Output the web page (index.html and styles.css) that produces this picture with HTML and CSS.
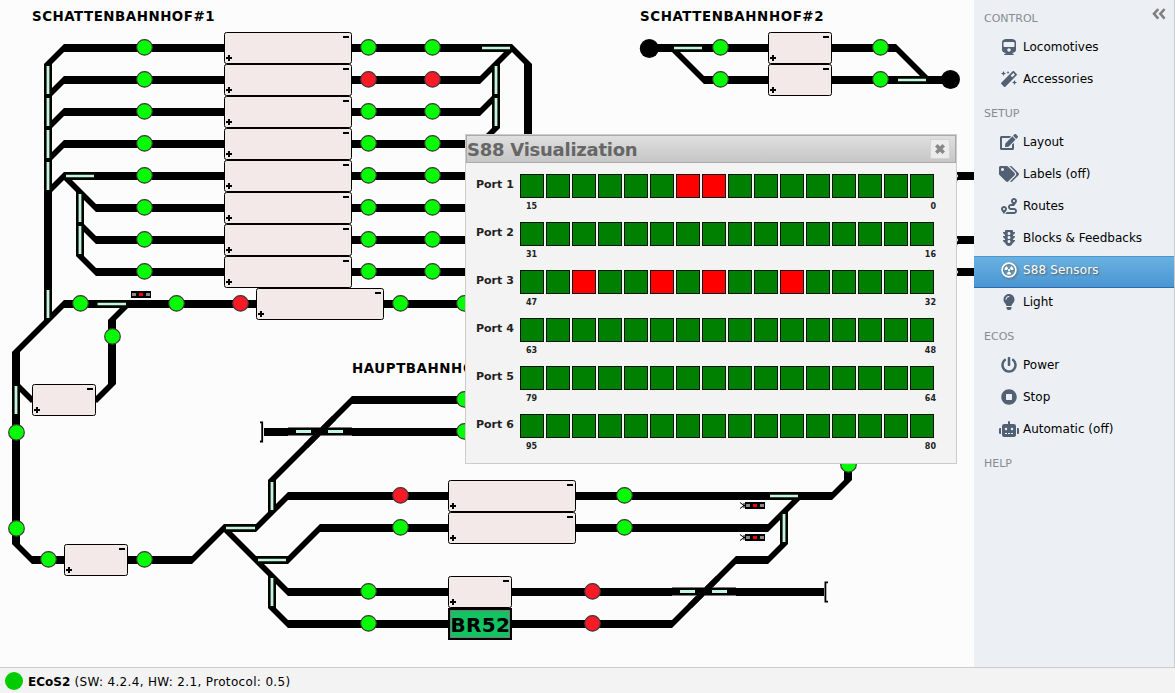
FILE: index.html
```html
<!DOCTYPE html>
<html lang="en">
<head>
<meta charset="utf-8">
<title>S88 Visualization</title>
<link rel="stylesheet" href="styles.css">
</head>
<body>
<div class="app">
  <main class="plan">
    <svg class="plan-canvas" width="974" height="667" viewBox="0 0 974 667">
      <path class="track" d="M64 48H512M64 80H480M64 112H480M64 144H480M64 176H480M96 208H480M96 240H480M96 272H480M64 304H480M32 560H192M224 528H256M256 560H288M288 496H832M320 528H768M352 400H480M264 432H480M288 592H824M288 624H672M736 560H768M656 48H896M704 80H944M950 176H974M950 240H974M950 272H974"/>
      <path class="track" d="M48 64V320M80 192V256M112 320V384M16 352V544M272 480V512M272 576V608M496 64V128M528 64V140M784 512V544M848 460V480"/>
      <path class="diagonal" d="M48 64L64 48M48 96L64 80M48 128L64 112M48 160L64 144M48 192L64 176M48 320L64 304M64 176L96 208M80 224L96 240M80 256L96 272M48 320L16 352M128 304L112 320M112 384L97 399M16 384L31 399M16 544L32 560M192 560L224 528M256 528L288 496M272 480L352 400M224 528L288 592M288 560L320 528M272 608L288 624M672 624L736 560M768 560L784 544M768 528L800 496M832 496L848 480M512 48L528 64M512 48L480 80M496 96L480 112M496 128L480 144M674 50L704 80M896 48L926 78M956 178L940 194M956 242L940 258"/>
      <path class="crossing-edge" d="M288 427.5H352M288 435.5H352M672 587.5H736M672 595.5H736"/>
      <path class="diagonal" d="M308 444L332 420M692 604L716 580"/>
      <path class="point" d="M66 176H94M97.5 304H126M482 48H510M226 528H255M258 560H286M770 496H798M674 48H702M898 80H926M954 176H958M954 240H958M954 272H958"/>
      <path class="point point-upright" d="M48 66V94M48 98V126M48 130V158M48 162V190M48 290V318M80 194V222M80 226V254M16 386V414M272 482V510M272 578V606M496 66V94M496 98V126M784 514V542"/>
      <path class="point point-wide" d="M296 431.5H311M328 431.5H343M680 591.5H695M712 591.5H727"/>
      <path class="buffer" d="M260 422.3H262.2V441.5H260M828 582.3H825.4V601.7H828"/>
      <circle cx="649.3" cy="48.5" r="9.5"/>
      <circle cx="950.5" cy="79.5" r="9.5"/>
      <g id="blocks"></g>
      <g id="sensors"></g>
      <g id="signals"></g>
      <rect x="449" y="609" width="62" height="30" class="train-frame"/>
      <rect x="450.5" y="610.5" width="59" height="27" class="train"/>
      <text class="train-name" x="450.5" y="631.6" textLength="59.5">BR52</text>
      <text class="station" x="32" y="21" textLength="182.5">SCHATTENBAHNHOF#1</text>
      <text class="station" x="640" y="21" textLength="183.5">SCHATTENBAHNHOF#2</text>
      <text class="station" x="352" y="373" textLength="132">HAUPTBAHNHOF</text>
    </svg>
  </main>

  <nav class="sidebar">
    <svg class="collapse" width="14" height="12" viewBox="0 0 14 12"><path d="M6.3 1L2 5.8L6.3 10.6M12.6 1L8.3 5.8L12.6 10.6"/></svg>
    <h2 class="group">CONTROL</h2>
    <a class="item"><svg class="icon" viewBox="0 0 448 512"><path d="M448 96v256c0 51.815-61.624 96-130.022 96l62.98 49.721C386.905 502.417 383.562 512 376 512H72c-7.578 0-10.892-9.594-4.957-14.279L130.022 448C61.82 448 0 403.954 0 352V96C0 42.981 64 0 128 0h192c65 0 128 42.981 128 96zm-48 136V120c0-13.255-10.745-24-24-24H72c-13.255 0-24 10.745-24 24v112c0 13.255 10.745 24 24 24h304c13.255 0 24-10.745 24-24zm-176 64c-30.928 0-56 25.072-56 56s25.072 56 56 56 56-25.072 56-56-25.072-56-56-56z"/></svg><span>Locomotives</span></a>
    <a class="item"><svg class="icon" viewBox="0 0 512 512"><path d="M224 96l16-32 32-16-32-16-16-32-16 32-32 16 32 16 16 32zM80 160l26.66-53.33L160 80l-53.34-26.67L80 0 53.34 53.33 0 80l53.34 26.67L80 160zm352 128l-26.66 53.33L352 368l53.34 26.67L432 448l26.66-53.33L512 368l-53.34-26.67L432 288zm70.62-193.77L417.77 9.38C411.53 3.12 403.34 0 395.15 0c-8.19 0-16.38 3.12-22.63 9.38L9.38 372.52c-12.5 12.5-12.5 32.76 0 45.25l84.85 84.85c6.25 6.25 14.44 9.37 22.62 9.37 8.19 0 16.38-3.12 22.63-9.37l363.14-363.15c12.5-12.48 12.5-32.75 0-45.24zM359.45 203.46l-50.91-50.91 86.6-86.6 50.91 50.91-86.6 86.6z"/></svg><span>Accessories</span></a>
    <h2 class="group">SETUP</h2>
    <a class="item"><svg class="icon" viewBox="0 0 576 512"><path d="M402.6 83.2l90.2 90.2c3.8 3.8 3.8 10 0 13.8L274.4 405.6l-92.8 10.3c-12.4 1.4-22.9-9.1-21.5-21.5l10.3-92.8L388.8 83.2c3.8-3.8 10-3.8 13.8 0zm162-22.9l-48.8-48.8c-15.2-15.2-39.9-15.2-55.2 0l-35.4 35.4c-3.8 3.8-3.8 10 0 13.8l90.2 90.2c3.8 3.8 10 3.8 13.8 0l35.4-35.4c15.2-15.3 15.2-40 0-55.2zM384 346.2V448H64V128h229.8c3.2 0 6.2-1.3 8.5-3.5l40-40c7.6-7.6 2.2-20.5-8.5-20.5H48C21.5 64 0 85.5 0 112v352c0 26.5 21.5 48 48 48h352c26.5 0 48-21.5 48-48V306.2c0-10.7-12.9-16-20.5-8.5l-40 40c-2.2 2.3-3.5 5.3-3.5 8.5z"/></svg><span>Layout</span></a>
    <a class="item"><svg class="icon" viewBox="0 0 640 512"><path d="M497.941 225.941L286.059 14.059A48 48 0 0 0 252.118 0H48C21.49 0 0 21.49 0 48v204.118a48 48 0 0 0 14.059 33.941l211.882 211.882c18.744 18.745 49.136 18.746 67.882 0l204.118-204.118c18.745-18.745 18.745-49.137 0-67.882zM112 160c-26.51 0-48-21.49-48-48s21.49-48 48-48 48 21.49 48 48-21.49 48-48 48zm513.941 133.823L421.823 497.941c-18.745 18.745-49.137 18.745-67.882 0l-.36-.36L527.64 323.522c16.999-16.999 26.36-39.6 26.36-63.64s-9.362-46.641-26.36-63.64L331.397 0h48.721a48 48 0 0 1 33.941 14.059l211.882 211.882c18.745 18.745 18.745 49.137 0 67.882z"/></svg><span>Labels (off)</span></a>
    <a class="item"><svg class="icon" viewBox="0 0 512 512"><path d="M416 320h-96c-17.6 0-32-14.4-32-32s14.4-32 32-32h96s96-107 96-160-43-96-96-96-96 43-96 96c0 25.5 22.2 63.4 45.3 96H320c-52.9 0-96 43.1-96 96s43.1 96 96 96h96c17.6 0 32 14.4 32 32s-14.4 32-32 32H185.5c-16 24.8-33.8 47.7-47.3 64H416c52.9 0 96-43.1 96-96s-43.1-96-96-96zm0-256c17.7 0 32 14.3 32 32s-14.3 32-32 32-32-14.3-32-32 14.3-32 32-32zM96 256c-53 0-96 43-96 96s96 160 96 160 96-107 96-160-43-96-96-96zm0 128c-17.7 0-32-14.3-32-32s14.3-32 32-32 32 14.3 32 32-14.3 32-32 32z"/></svg><span>Routes</span></a>
    <a class="item"><svg class="icon" viewBox="0 0 384 512"><path d="M384 192h-64v-37.88c37.2-13.22 64-48.38 64-90.12h-64V32c0-17.67-14.33-32-32-32H96C78.33 0 64 14.33 64 32v32H0c0 41.74 26.8 76.9 64 90.12V192H0c0 41.74 26.8 76.9 64 90.12V320H0c0 42.84 28.25 78.69 66.99 91.05C79.42 468.72 130.6 512 192 512s112.58-43.28 125.01-100.95C355.75 398.69 384 362.84 384 320h-64v-37.88c37.2-13.22 64-48.38 64-90.12zM192 416c-26.51 0-48-21.49-48-48s21.49-48 48-48 48 21.49 48 48-21.49 48-48 48zm0-128c-26.51 0-48-21.49-48-48s21.49-48 48-48 48 21.49 48 48-21.49 48-48 48zm0-128c-26.51 0-48-21.49-48-48s21.49-48 48-48 48 21.49 48 48-21.49 48-48 48z"/></svg><span>Blocks &amp; Feedbacks</span></a>
    <a class="item item-selected"><svg class="icon" viewBox="0 0 512 512"><path fill-rule="evenodd" d="M256 8a248 248 0 1 0 0 496a248 248 0 1 0 0-496zM256 62a194 194 0 1 1 0 388a194 194 0 1 1 0-388z"/><circle cx="256" cy="256" r="36"/><path d="M312 256H405A149 149 0 0 0 330 127L284 207A56 56 0 0 1 312 256zM200 256H107A149 149 0 0 1 182 127L228 207A56 56 0 0 0 200 256zM284 305L330 385A149 149 0 0 1 182 385L228 305A56 56 0 0 0 284 305z"/></svg><span>S88 Sensors</span></a>
    <a class="item"><svg class="icon" viewBox="0 0 352 512"><path d="M96.06 454.35c.01 6.29 1.87 12.45 5.36 17.69l17.09 25.69a31.99 31.99 0 0 0 26.64 14.28h61.71a31.99 31.99 0 0 0 26.64-14.28l17.09-25.69a31.989 31.989 0 0 0 5.36-17.69l.04-38.35H96.01l.05 38.35zM0 176c0 44.37 16.45 84.85 43.56 115.78 16.52 18.85 42.36 58.23 52.21 91.45.04.26.07.52.11.78h160.24c.04-.26.07-.51.11-.78 9.85-33.22 35.69-72.6 52.21-91.45C335.55 260.85 352 220.37 352 176 352 78.61 272.91-.3 175.45 0 73.44.31 0 82.97 0 176zm176-80c-44.11 0-80 35.89-80 80 0 8.84-7.16 16-16 16s-16-7.16-16-16c0-61.76 50.24-112 112-112 8.84 0 16 7.16 16 16s-7.16 16-16 16z"/></svg><span>Light</span></a>
    <h2 class="group">ECOS</h2>
    <a class="item"><svg class="icon" viewBox="0 0 512 512"><path d="M400 54.1c63 45 104 118.6 104 201.9 0 136.8-110.8 247.7-247.5 248C120 504.3 8.2 393 8 256.4 7.9 173.1 48.9 99.3 111.8 54.2c11.7-8.3 28-4.8 35 7.7L162.6 90c5.9 10.5 3.1 23.8-6.6 31-41.5 30.8-68 79.6-68 134.9-.1 92.3 74.5 168.1 168 168.1 91.6 0 168.6-74.2 168-169.1-.3-51.8-24.7-101.8-68.1-134-9.7-7.2-12.4-20.5-6.5-30.9l15.8-28.1c7-12.4 23.2-16.1 34.8-7.8zM296 264V24c0-13.3-10.7-24-24-24h-32c-13.3 0-24 10.7-24 24v240c0 13.3 10.7 24 24 24h32c13.3 0 24-10.7 24-24z"/></svg><span>Power</span></a>
    <a class="item"><svg class="icon" viewBox="0 0 512 512"><path d="M256 8C119 8 8 119 8 256s111 248 248 248 248-111 248-248S393 8 256 8zm96 328c0 8.8-7.2 16-16 16H176c-8.8 0-16-7.2-16-16V176c0-8.8 7.2-16 16-16h160c8.8 0 16 7.2 16 16v160z"/></svg><span>Stop</span></a>
    <a class="item"><svg class="icon" viewBox="0 0 640 512"><path d="M32,224H64V416H32A31.96166,31.96166,0,0,1,0,384V256A31.96166,31.96166,0,0,1,32,224Zm512-48V448a64.06328,64.06328,0,0,1-64,64H160a64.06328,64.06328,0,0,1-64-64V176a79.974,79.974,0,0,1,80-80H288V32a32,32,0,0,1,64,0V96H464A79.974,79.974,0,0,1,544,176ZM264,256a40,40,0,1,0-40,40A39.997,39.997,0,0,0,264,256Zm-8,128H192v32h64Zm96,0H288v32h64ZM456,256a40,40,0,1,0-40,40A39.997,39.997,0,0,0,456,256Zm-8,128H384v32h64ZM640,256V384a31.96166,31.96166,0,0,1-32,32H576V224h32A31.96166,31.96166,0,0,1,640,256Z"/></svg><span>Automatic (off)</span></a>
    <h2 class="group">HELP</h2>
  </nav>

  <footer class="status">
    <span class="led"></span>
    <span class="status-text"><b>ECoS2</b> (SW: 4.2.4, HW: 2.1, Protocol: 0.5)</span>
  </footer>
</div>

<section class="dialog">
  <header class="dialog-title">
    <span class="dialog-name">S88 Visualization</span>
    <button class="close"><svg width="12" height="12" viewBox="0 0 12 12"><path d="M2.3 2.3L9.7 9.7M9.7 2.3L2.3 9.7"/></svg></button>
  </header>
  <div class="ports" id="ports"></div>
</section>
<script src="app.js"></script>
</body>
</html>
```
FILE: styles.css
```css
* { box-sizing: border-box; }

body {
  margin: 0;
  width: 1175px;
  height: 693px;
  overflow: hidden;
  background: #fcfcfc;
  font-family: Verdana, "DejaVu Sans", sans-serif;
  color: #000;
}

.app {
  display: grid;
  grid-template-columns: 974px 201px;
  grid-template-rows: 667px 26px;
  height: 693px;
}

.plan { background: #fcfcfc; overflow: hidden; }
.plan-canvas { display: block; }

.track { fill: none; stroke: #000; stroke-width: 8; }
.diagonal { fill: none; stroke: #000; stroke-width: 5.66; stroke-linecap: square; }
.crossing-edge { stroke: #777; stroke-width: 1; }
.point { fill: none; stroke: #c0fadc; stroke-width: 2.4; }
.point-upright { stroke-width: 2.8; }
.point-wide { stroke-width: 3; }
.buffer { fill: none; stroke: #000; stroke-width: 1.8; }
.block { fill: #f3e9e8; stroke: #000; stroke-width: 1; }
.polarity { stroke: #000; stroke-width: 2; }
.sensor { fill: #0f0; stroke: #403838; stroke-width: 1.2; }
.sensor-busy { fill: #f91c26; }
.signal-lamp { fill: #888; }
.signal-stop { fill: #f00; }
.signal-horn { fill: none; stroke: #000; stroke-width: 1; }
.train-frame { fill: #000; stroke: #000; stroke-width: 2; }
.train { fill: #12c462; stroke: #777; stroke-width: 1; }
.train-name { font-size: 20px; font-weight: bold; }
.station { font-size: 13.4px; font-weight: bold; }

.sidebar {
  position: relative;
  padding-top: 2px;
  background: #ecf0f5;
  border-right: 1px solid #ccc;
}

.collapse { position: absolute; top: 8px; right: 8px; }
.collapse path { fill: none; stroke: #808080; stroke-width: 2.6; }

.group {
  margin: 0;
  height: 31px;
  padding-left: 10px;
  font-size: 11px;
  font-weight: normal;
  line-height: 34px;
  color: #868b92;
}

.item {
  display: flex;
  align-items: center;
  height: 32px;
  padding: 0 0 4px 25px;
  font-size: 12px;
}

.item span { margin-left: 4px; white-space: nowrap; }
.icon { width: 20px; height: 16px; fill: #516173; }

.item-selected {
  border-top: 1px solid #4a96d0;
  border-bottom: 1px solid #2a6cab;
  padding-bottom: 4px;
  background: linear-gradient(#69b1e0, #4a96d3);
  color: #fff;
  letter-spacing: 0.15px;
  text-shadow: 1px 1px 2px #555;
}
.item-selected .icon { fill: #fff; filter: drop-shadow(1px 1px 1px #666); }

.status {
  grid-column: 1 / 3;
  display: flex;
  align-items: center;
  gap: 5px;
  padding: 1px 0 0 5px;
  background: #f3f3f3;
  border-top: 1px solid #ccc;
  font-size: 12px;
}
.status-text { padding-top: 2px; letter-spacing: 0.34px; }
.status-text b { letter-spacing: 0; }
.led { width: 18px; height: 18px; border-radius: 50%; background: #0c0; }

.dialog {
  position: absolute;
  left: 465px;
  top: 134px;
  width: 492px;
  height: 330px;
  border: 1px solid #ccc;
  background: #f3f3f3;
}

.dialog-title {
  display: flex;
  align-items: center;
  justify-content: space-between;
  height: 28px;
  padding: 0 5px 0 0;
  border: 1px solid #aaa;
  background: linear-gradient(#dfdfdf, #c6c6c6);
}
.dialog-name { font-size: 18px; font-weight: bold; letter-spacing: -0.25px; color: #666; }

.close {
  display: flex;
  align-items: center;
  justify-content: center;
  width: 20px;
  height: 20px;
  padding: 0;
  border: 1px solid #d3d3d3;
  background: #ececec;
}
.close path { stroke: #888; stroke-width: 3.6; }

.ports { padding: 11px 0 0 10px; }
.port {
  display: grid;
  grid-template-columns: 44px 414px;
  grid-template-rows: 24px 24px;
}
.port-name { font-size: 11px; font-weight: bold; line-height: 22px; color: #222; }
.contacts { display: flex; gap: 2px; }
.contact { width: 24px; height: 24px; border: 1px solid #111; background: #008000; }
.contact-on { background: #f00; }
.range {
  grid-column: 2;
  display: flex;
  justify-content: space-between;
  margin: 0 -2px 0 6px;
  font-size: 8px;
  font-weight: bold;
  line-height: 18px;
  color: #222;
}
```
FILE: app.js
```js
const SVG = 'http://www.w3.org/2000/svg';

function draw(parent, tag, cls, attrs) {
  const el = document.createElementNS(SVG, tag);
  if (cls) el.setAttribute('class', cls);
  for (const k in attrs) el.setAttribute(k, attrs[k]);
  parent.appendChild(el);
}

// Blocks: x, y, width
const blocks = [
  [256, 288, 128], [32, 384, 64], [64, 544, 64], [768, 32, 64], [768, 64, 64],
  [448, 480, 128], [448, 512, 128], [448, 576, 64]
];
for (let y = 32; y <= 256; y += 32) blocks.push([224, y, 128]);
const blockLayer = document.getElementById('blocks');
for (const [x, y, w] of blocks) {
  draw(blockLayer, 'rect', 'block', { x: x + 0.5, y: y + 0.5, width: w - 1, height: 31, rx: 2 });
  draw(blockLayer, 'path', 'polarity', { d: `M${x + 2} ${y + 26}h6M${x + 5} ${y + 23}v6M${x + w - 9} ${y + 5}h6` });
}

// Track sensors: x, y, occupied
const sensors = [
  [80, 304], [176, 304], [240, 304, 1], [400, 304], [464, 304], [112, 337], [16, 433], [16, 529],
  [48, 560], [144, 560], [464, 400], [464, 432], [400, 496, 1], [400, 528], [624, 496], [624, 528],
  [368, 592], [368, 624], [592, 592, 1], [592, 624, 1], [848, 465],
  [720, 48], [720, 80], [880, 48], [880, 80]
];
for (let y = 48; y <= 272; y += 32) {
  sensors.push([144, y], [368, y, y === 80], [432, y, y === 80]);
}
const sensorLayer = document.getElementById('sensors');
for (const [x, y, busy] of sensors) {
  draw(sensorLayer, 'circle', busy ? 'sensor sensor-busy' : 'sensor', { cx: x + 0.5, cy: y - 0.6, r: 7.8 });
}

// Signals: x, y, with distant-signal horns
const signalLayer = document.getElementById('signals');
for (const [x, y, horns] of [[131, 291, 0], [745, 502, 1], [745, 534, 1]]) {
  draw(signalLayer, 'rect', '', { x, y, width: 20, height: 7 });
  [1, 8, 15].forEach((dx, i) => {
    draw(signalLayer, 'rect', i === 1 ? 'signal-stop' : 'signal-lamp', { x: x + dx, y: y + 2, width: 4, height: 3 });
  });
  if (horns) draw(signalLayer, 'path', 'signal-horn', { d: `M${x - 5} ${y + 0.5}L${x - 1} ${y + 3.5}L${x - 5} ${y + 6.5}M${x - 2} ${y + 3.5}h3M${x - 2} ${y + 2}h2M${x - 2} ${y + 5}h2` });
}

// S88 ports, 16 contacts each, highest contact first
const active = [9, 8, 45, 42, 40, 37];
let html = '';
for (let port = 0; port < 6; port++) {
  const low = port * 16, high = low + 15;
  let cells = '';
  for (let n = high; n >= low; n--) {
    cells += `<span class="contact${active.includes(n) ? ' contact-on' : ''}"></span>`;
  }
  html += `<div class="port"><span class="port-name">Port ${port + 1}</span><div class="contacts">${cells}</div>` +
    `<div class="range"><span>${high}</span><span>${low}</span></div></div>`;
}
document.getElementById('ports').innerHTML = html;
```
